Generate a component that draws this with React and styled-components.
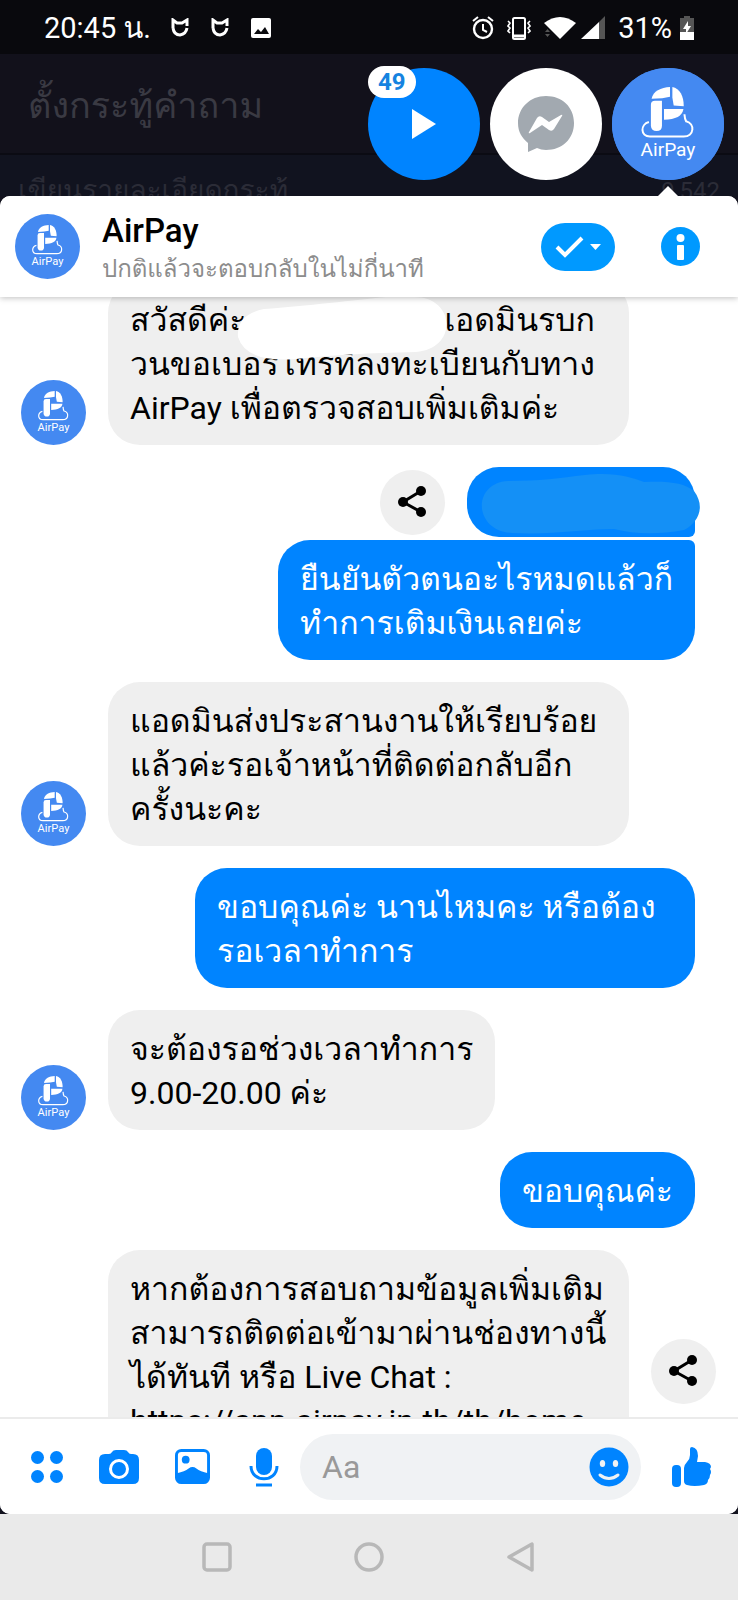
import React from 'react';
import styled, { createGlobalStyle } from 'styled-components';

const GlobalStyle = createGlobalStyle`
    body {
        margin: 0;
        background: #12121e;
        font-family: Roboto, Loma, sans-serif;
    }
    * {
        box-sizing: border-box;
    }
`;

const AirPayLogo = ({ size }) => (
    <Logo viewBox="0 0 334 334" $size={size} role="img" aria-label="AirPay">
        <circle cx="167" cy="167" r="167" fill="#4489f1" />
        <g fill="#fff">
            <path d="M116 110q0-12 12-12h21v74q0 16-16 16t-17-16z" />
            <path d="M118 92C122 70 146 58 173 57V86L150 90Z" />
            <path d="M180 57C202 61 214 84 214 114L184 112L180 88Z" />
            <path d="M155 122H213C210 143 190 153 155 154Z" />
        </g>
        <path
            d="M110 161C84 168 84 204 113 204H214C246 204 248 166 221 159Q217 152 216 138"
            fill="none"
            stroke="#fff"
            strokeWidth="6"
        />
        <text x="167" y="263" textAnchor="middle" fill="#fff" fontSize="57">
            AirPay
        </text>
    </Logo>
);

const ShareIcon = () => (
    <svg width="32" height="34" viewBox="0 0 32 34" aria-hidden="true">
        <path d="M25 6L7 17l18 10" fill="none" stroke="#000" strokeWidth="3" />
        <circle cx="25" cy="6" r="5" />
        <circle cx="7" cy="17" r="5" />
        <circle cx="25" cy="27" r="5" />
    </svg>
);

const MiIcon = () => (
    <svg width="18" height="20" viewBox="0 0 18 20" aria-hidden="true">
        <path
            d="M2 10V2l4 3h5l5-3v6M2 10q1 7 7 7 6-1 7-7"
            fill="none"
            stroke="#fff"
            strokeWidth="3"
        />
    </svg>
);

const Message = ({ from, text, avatar, share, wide, joined }) => (
    <Row $from={from} $joined={joined}>
        {from === 'admin' && <Side>{avatar && <AirPayLogo size={65} />}</Side>}
        {from === 'me' && share && (
            <ShareButton aria-label="Share">
                <ShareIcon />
            </ShareButton>
        )}
        {text ? (
            <Bubble $from={from} $wide={wide} $joined={joined}>
                {text}
            </Bubble>
        ) : (
            <HiddenBubble>
                <svg width="222" height="66" viewBox="0 0 222 66" aria-hidden="true">
                    <path
                        d="M28 12C60 12 80 9 105 6C135 3 150 8 164 13C190 12 204 14 214 22C226 38 218 54 204 61Q165 68 134 60C100 60 75 66 32 64C-7 62-8 14 28 12Z"
                        fill="#1490f6"
                    />
                </svg>
            </HiddenBubble>
        )}
        {from === 'admin' && share && (
            <ShareButton aria-label="Share">
                <ShareIcon />
            </ShareButton>
        )}
    </Row>
);

const App = () => (
    <Screen>
        <GlobalStyle />
        <StatusBar>
            <StatusGroup>
                <span>20:45 น.</span>
                <StatusIcons>
                    <MiIcon />
                    <MiIcon />
                    <svg width="20" height="20" viewBox="0 0 20 20" aria-hidden="true">
                        <rect width="20" height="20" rx="2" fill="#fff" />
                        <path d="M3 16l4-5 3 3 4-5 4 7z" fill="#0a0a0e" />
                    </svg>
                </StatusIcons>
            </StatusGroup>
            <StatusGroup $tight>
                <svg width="22" height="24" viewBox="0 0 22 24" aria-hidden="true">
                    <circle cx="11" cy="13" r="9" fill="none" stroke="#fff" strokeWidth="2.4" />
                    <path d="M11 8v6l4 2M1 5l5-4M21 5l-5-4" fill="none" stroke="#fff" strokeWidth="2" />
                </svg>
                <svg width="24" height="24" viewBox="0 0 24 24" aria-hidden="true">
                    <rect x="6" y="2" width="12" height="21" rx="1.5" fill="none" stroke="#fff" strokeWidth="2" />
                    <path d="M6 20h12" stroke="#fff" strokeWidth="3" />
                    <path
                        d="M1 5l2 2-2 3 2 2-2 3 2 2M23 5l-2 2 2 3-2 2 2 3-2 2"
                        fill="none"
                        stroke="#fff"
                        strokeWidth="1.6"
                    />
                </svg>
                <Signals>
                    <svg width="32" height="24" viewBox="0 0 32 24" aria-hidden="true">
                        <path d="M0 7Q16-5 32 7L16 23z" fill="#fff" />
                        <path d="M1 16l2.500-3L6 16zM1 18l2.500 3L6 18z" fill="#555" />
                    </svg>
                    <svg width="24" height="24" viewBox="0 0 24 24" aria-hidden="true">
                        <path d="M24 0v23H18V6z" fill="#555" />
                        <path d="M0 23L18 6v17z" fill="#fff" />
                    </svg>
                </Signals>
                <Percent>31%</Percent>
                <svg width="14" height="24" viewBox="0 0 14 24" aria-hidden="true">
                    <path d="M4 0h6v2h4v22H0V2h4z" fill="#555" />
                    <path d="M0 16h14v8H0z" fill="#fff" />
                    <path d="M8 5l-5 8h3v5l5-8H8z" fill="#fff" />
                </svg>
            </StatusGroup>
        </StatusBar>

        <Backdrop>
            <BackTitle>ตั้งกระทู้คำถาม</BackTitle>
            <BackDetail>
                <span>เขียนรายละเอียดกระทู้</span>
                <small>9,542</small>
            </BackDetail>
            <Heads>
                <Head $color="#0084ff" aria-label="Play">
                    <svg width="26" height="32" viewBox="0 0 26 32" aria-hidden="true">
                        <path d="M1 1l24 15L1 31z" fill="#fff" />
                    </svg>
                    <Badge>49</Badge>
                </Head>
                <Head $color="#fff" aria-label="Messenger">
                    <svg width="56" height="56" viewBox="0 0 56 56" aria-hidden="true">
                        <path
                            d="M28 0C12 0 0 12 0 27c0 9 4 15 10 20v9l9-4q4 2 9 2c16 0 28-11 28-27S44 0 28 0z"
                            fill="#a2a9b0"
                        />
                        <path
                            d="M11 36l8-14q2-3 5-1l7 5 12-7q2-1 1 1l-8 13q-2 3-5 1l-7-5-12 8q-2 1-1-1z"
                            fill="#fff"
                        />
                    </svg>
                </Head>
                <Head $color="#4489f1" $active aria-label="AirPay">
                    <AirPayLogo size={112} />
                </Head>
            </Heads>
        </Backdrop>

        <Panel>
            <Header>
                <AirPayLogo size={65} />
                <Titles>
                    <h1>AirPay</h1>
                    <p>ปกติแล้วจะตอบกลับในไม่กี่นาที</p>
                </Titles>
                <DoneButton aria-label="Mark as done">
                    <svg width="46" height="22" viewBox="0 0 46 22" aria-hidden="true">
                        <path d="M2 11l8 8L27 2" fill="none" stroke="#fff" strokeWidth="4" />
                        <path d="M35 8h11l-5.500 6z" fill="#fff" />
                    </svg>
                </DoneButton>
                <IconButton aria-label="Info">
                    <svg width="39" height="39" viewBox="0 0 39 39" aria-hidden="true">
                        <circle cx="19.500" cy="19.500" r="19.500" fill="#0099ff" />
                        <circle cx="19.500" cy="11" r="4" fill="#fff" />
                        <rect x="16" y="18" width="7" height="15" rx="1" fill="#fff" />
                    </svg>
                </IconButton>
            </Header>

            <Chat>
                <Scribble width="212" height="66" viewBox="0 0 212 66" aria-hidden="true">
                    <path
                        d="M28 12C70 9 120 3 150 0H178C220 0 222 52 180 55C130 56 100 58 60 62Q10 66 2 40Q0 18 28 12Z"
                        fill="#fff"
                    />
                </Scribble>
                <Message
                    from="admin"
                    avatar
                    wide
                    text={
                        <>
                            สวัสดีค่ะ
                            <Blank />
                            {'แอดมินรบก\nวนขอเบอร์โทรที่ลงทะเบียนกับทาง\nAirPay เพื่อตรวจสอบเพิ่มเติมค่ะ'}
                        </>
                    }
                />
                <Message from="me" share />
                <Message from="me" joined text={'ยืนยันตัวตนอะไรหมดแล้วก็\nทำการเติมเงินเลยค่ะ'} />
                <Message
                    from="admin"
                    avatar
                    wide
                    text={'แอดมินส่งประสานงานให้เรียบร้อย\nแล้วค่ะรอเจ้าหน้าที่ติดต่อกลับอีก\nครั้งนะคะ'}
                />
                <Message from="me" wide text={'ขอบคุณค่ะ นานไหมคะ หรือต้อง\nรอเวลาทำการ'} />
                <Message from="admin" avatar text={'จะต้องรอช่วงเวลาทำการ\n9.00-20.00 ค่ะ'} />
                <Message from="me" text="ขอบคุณค่ะ" />
                <Message
                    from="admin"
                    wide
                    share
                    text={'หากต้องการสอบถามข้อมูลเพิ่มเติม\nสามารถติดต่อเข้ามาผ่านช่องทางนี้\nได้ทันที หรือ Live Chat :\nhttps://app.airpay.in.th/th/home'}
                />
            </Chat>

            <Composer>
                <Tools>
                    <IconButton aria-label="More">
                        <svg width="32" height="32" viewBox="0 0 32 32" fill="#0084ff" aria-hidden="true">
                            <circle cx="6.500" cy="6.500" r="6.500" />
                            <circle cx="25.500" cy="6.500" r="6.500" />
                            <circle cx="6.500" cy="25.500" r="6.500" />
                            <circle cx="25.500" cy="25.500" r="6.500" />
                        </svg>
                    </IconButton>
                    <IconButton aria-label="Camera">
                        <svg width="40" height="36" viewBox="0 0 40 36" aria-hidden="true">
                            <path
                                d="M6 5h4q2 0 3-2t4-2h8q3 0 4 2t3 2h2q6 0 6 6v18q0 6-6 6H6q-6 0-6-6V11q0-6 6-6z"
                                fill="#0084ff"
                            />
                            <circle cx="20" cy="20" r="8.500" fill="#0084ff" stroke="#fff" strokeWidth="3" />
                        </svg>
                    </IconButton>
                    <IconButton aria-label="Gallery">
                        <svg width="35" height="35" viewBox="0 0 36 36" aria-hidden="true">
                            <rect
                                x="1.500"
                                y="1.500"
                                width="33"
                                height="33"
                                rx="5"
                                fill="none"
                                stroke="#0084ff"
                                strokeWidth="3"
                            />
                            <circle cx="11" cy="11" r="4" fill="#0084ff" />
                            <path d="M2 25q8-2 12-5 4-3 8 0 4 3 12 5v5q0 5-5 5H7q-5 0-5-5z" fill="#0084ff" />
                        </svg>
                    </IconButton>
                    <IconButton aria-label="Voice">
                        <svg width="36" height="40" viewBox="-3 0 36 40" aria-hidden="true">
                            <rect x="7" y="1" width="16" height="27" rx="8" fill="#0084ff" />
                            <path d="M2 19c0 17 26 17 26 0M7 38h16" fill="none" stroke="#0084ff" strokeWidth="3" />
                        </svg>
                    </IconButton>
                </Tools>
                <Field>
                    <input type="text" placeholder="Aa" aria-label="Message" />
                    <IconButton aria-label="Emoji">
                        <svg width="40" height="40" viewBox="0 0 40 40" aria-hidden="true">
                            <circle cx="20" cy="20" r="19.500" fill="#0084ff" />
                            <ellipse cx="13.500" cy="16.500" rx="2.700" ry="3.600" fill="#f0f2f4" />
                            <ellipse cx="26.500" cy="16.500" rx="2.700" ry="3.600" fill="#f0f2f4" />
                            <path
                                d="M11 28q9 7 18 0"
                                fill="none"
                                stroke="#f0f2f4"
                                strokeWidth="3"
                                strokeLinecap="round"
                            />
                        </svg>
                    </IconButton>
                </Field>
                <IconButton aria-label="Like">
                    <svg width="40" height="42" viewBox="0 0 40 42" fill="#0084ff" aria-hidden="true">
                        <rect x="0" y="19" width="9" height="22" rx="4" />
                        <path d="M12 22q0-3 3-6 3-3 3-7V3q0-2 2-2 6 1 6 9l-1 6h8q6 1 6 5l-1 2q2 3 0 6 0 3-2 5 0 4-4 5-10 2-17 0-3-1-3-4z" />
                    </svg>
                </IconButton>
            </Composer>
        </Panel>

        <NavBar>
            <IconButton aria-label="Recent apps">
                <svg width="30" height="30" viewBox="0 0 30 30" aria-hidden="true">
                    <rect x="2" y="2" width="26" height="26" rx="3" fill="none" stroke="#b8b8b8" strokeWidth="3.500" />
                </svg>
            </IconButton>
            <IconButton aria-label="Home">
                <svg width="30" height="30" viewBox="0 0 30 30" aria-hidden="true">
                    <circle cx="15" cy="15" r="13" fill="none" stroke="#b8b8b8" strokeWidth="3.500" />
                </svg>
            </IconButton>
            <IconButton aria-label="Back">
                <svg width="30" height="30" viewBox="0 0 30 30" aria-hidden="true">
                    <path d="M26 2v26L3 15z" fill="none" stroke="#b8b8b8" strokeWidth="3.500" strokeLinejoin="round" />
                </svg>
            </IconButton>
        </NavBar>
    </Screen>
);

const Logo = styled.svg`
    display: block;
    flex: none;
    width: ${({ $size }) => $size}px;
    height: ${({ $size }) => $size}px;
    font-family: Roboto, sans-serif;
`;

const Screen = styled.div`
    display: flex;
    flex-direction: column;
    height: 100vh;
`;

const StatusBar = styled.header`
    flex: none;
    height: 54px;
    padding: 2px 44px 0;
    display: flex;
    align-items: center;
    justify-content: space-between;
    background: #09090d;
    color: #fff;
    font-size: 29px;
`;

const StatusGroup = styled.div`
    display: flex;
    align-items: center;
    gap: ${({ $tight }) => ($tight ? '13px' : '20px')};
`;

const StatusIcons = styled.div`
    display: flex;
    align-items: center;
    gap: 22px;
`;

const Signals = styled.div`
    display: flex;
    gap: 5px;
`;

const Percent = styled.span`
    margin-right: -5px;
`;

const Backdrop = styled.div`
    flex: none;
    position: relative;
    height: 142px;
    overflow: hidden;
    background: #12111b;
`;

const BackTitle = styled.div`
    height: 101px;
    padding: 0 28px;
    line-height: 104px;
    font-size: 36px;
    color: #3a3a43;
    border-bottom: 2px solid #0b0b13;
`;

const BackDetail = styled.div`
    display: flex;
    justify-content: space-between;
    padding: 18px 18px 0;
    background: #11131f;
    color: #2b2c37;
    font-size: 28px;
    line-height: 36px;

    small {
        font-size: 24px;
    }
`;

const Heads = styled.nav`
    position: absolute;
    top: 14px;
    right: 14px;
    display: flex;
    gap: 10px;
`;

const Head = styled.button`
    position: relative;
    display: flex;
    align-items: center;
    justify-content: center;
    width: 112px;
    height: 112px;
    padding: 0;
    border: none;
    border-radius: 50%;
    background: ${({ $color }) => $color};

    ${({ $active }) =>
        $active &&
        `
        &::after {
            content: '';
            position: absolute;
            top: 118px;
            left: 46px;
            border: 10px solid transparent;
            border-top: none;
            border-bottom-color: #fff;
        }
    `}
`;

const Badge = styled.span`
    position: absolute;
    top: -2px;
    left: 0;
    padding: 0 10px;
    border-radius: 16px;
    background: #fff;
    color: #1583e0;
    font-family: Roboto, sans-serif;
    font-size: 24px;
    font-weight: 700;
    line-height: 32px;
`;

const Panel = styled.main`
    flex: 1;
    min-height: 0;
    display: flex;
    flex-direction: column;
    overflow: hidden;
    border-radius: 10px;
    background: #fff;
`;

const Header = styled.div`
    position: relative;
    z-index: 2;
    flex: none;
    display: flex;
    align-items: center;
    height: 101px;
    padding: 0 38px 0 15px;
    background: #fff;
    box-shadow: 0 1px 6px rgba(0, 0, 0, 0.25);
`;

const Titles = styled.div`
    flex: 1;
    margin-left: 22px;
    padding-top: 4px;

    h1 {
        margin: 0;
        font-size: 33px;
        font-weight: 500;
        line-height: 40px;
    }

    p {
        margin: 0;
        color: #8c8c8c;
        font-size: 24px;
        line-height: 36px;
    }
`;

const IconButton = styled.button`
    display: flex;
    flex: none;
    padding: 0;
    border: none;
    background: none;
`;

const DoneButton = styled(IconButton)`
    align-items: center;
    justify-content: center;
    width: 74px;
    height: 48px;
    margin-right: 46px;
    border-radius: 24px;
    background: #0099ff;
`;

const Chat = styled.section`
    position: relative;
    flex: 1;
    min-height: 0;
    overflow: hidden;
`;

const Scribble = styled.svg`
    position: absolute;
    z-index: 1;
    top: 0;
    left: 236px;
`;

const Row = styled.div`
    display: flex;
    align-items: ${({ $from }) => ($from === 'me' ? 'center' : 'flex-end')};
    justify-content: ${({ $from }) => ($from === 'me' ? 'flex-end' : 'flex-start')};
    gap: 22px;
    margin-top: ${({ $joined }) => ($joined ? '3px' : '22px')};
    padding: 0 43px 0 21px;

    /* list is scrolled slightly past the first bubble */
    svg + & {
        margin-top: -16px;
    }

    &:last-child {
        align-items: center;
        padding-right: 22px;
    }

    &:last-child > button {
        margin-top: 34px;
    }
`;

const Side = styled.div`
    flex: none;
    width: 65px;
`;

const Bubble = styled.div`
    width: ${({ $wide, $from }) => ($wide ? ($from === 'me' ? '500px' : '521px') : 'auto')};
    padding: 17px 22px 15px;
    border-radius: ${({ $joined }) => ($joined ? '32px 6px 32px 32px' : '32px')};
    background: ${({ $from }) => ($from === 'me' ? '#0084ff' : '#efefef')};
    color: ${({ $from }) => ($from === 'me' ? '#fff' : '#000')};
    font-size: 32px;
    line-height: 44px;
    white-space: pre;
`;

const Blank = styled.span`
    display: inline-block;
    width: 188px;
`;

const HiddenBubble = styled.div`
    width: 228px;
    height: 70px;
    padding: 2px 0 0 13px;
    border-radius: 32px 32px 6px 32px;
    background: #0084ff;

    svg {
        display: block;
    }
`;

const ShareButton = styled.button`
    display: flex;
    flex: none;
    align-items: center;
    justify-content: center;
    width: 65px;
    height: 65px;
    padding: 0 2px 0 0;
    border: none;
    border-radius: 50%;
    background: #efefef;
`;

const Composer = styled.div`
    flex: none;
    display: flex;
    align-items: center;
    height: 97px;
    padding: 0 26px 0 31px;
    border-top: 2px solid #ebebeb;
    background: #fff;
`;

const Tools = styled.div`
    display: flex;
    align-items: center;
    gap: 36px;
    margin-right: 18px;
`;

const Field = styled.div`
    display: flex;
    flex: 1;
    align-items: center;
    min-width: 0;
    height: 66px;
    margin-right: 31px;
    padding: 0 12px 0 22px;
    border-radius: 33px;
    background: #f0f2f4;

    input {
        flex: 1;
        min-width: 0;
        padding: 0;
        border: none;
        outline: none;
        background: none;
        font-family: inherit;
        font-size: 32px;
    }

    input::placeholder {
        color: #999;
    }
`;

const NavBar = styled.footer`
    flex: none;
    display: flex;
    align-items: center;
    justify-content: center;
    gap: 122px;
    height: 86px;
    background: #eaeaea;
`;

export default App;
